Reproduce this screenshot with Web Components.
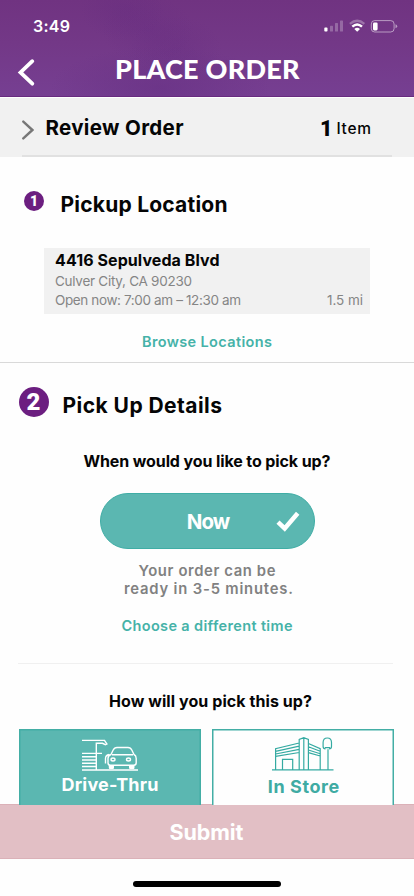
<!DOCTYPE html>
<html lang="en">
<head>
<meta charset="utf-8">
<meta name="viewport" content="width=device-width,initial-scale=1">
<title>Place Order</title>
<style>
html,body{margin:0;background:#fefefe;overflow:hidden}
body{font-family:Inter,Roboto,"Liberation Sans",sans-serif;color:#050505}
</style>
</head>
<body>
<order-page></order-page>
<script>
const define=(name,html,connected)=>{
  const t=document.createElement('template');
  t.innerHTML=html;
  customElements.define(name,class extends HTMLElement{
    constructor(){super();this.attachShadow({mode:'open'}).append(t.content.cloneNode(true));}
    connectedCallback(){if(connected)connected.call(this);}
  });
};

define('status-bar',`<style>
:host{display:flex;justify-content:space-between;align-items:center;height:20px;padding:16px 16px 0 33px;color:#fff}
ui-label{font:600 16px/20px Inter,sans-serif;margin-top:-1px}
svg{display:block}
</style>
<ui-label span="37">3:49</ui-label>
<svg width="75" height="16" viewBox="0 0 75 16" fill="none">
<rect x="1.3" y="9.6" width="3.2" height="4" rx=".8" fill="#fff"/>
<g fill="#fff" opacity=".25"><rect x="7" y="7.7" width="3" height="5.8" rx=".6"/><rect x="12" y="5" width="3" height="8.5" rx=".6"/><rect x="17" y="2.4" width="3" height="11.1" rx=".6"/></g>
<path d="M26.9 5.8Q34.2-.4 41.3 5.8" stroke="#fff" stroke-width="2.3" opacity=".3"/>
<path d="M29.3 8.6Q34.2 4.2 39 8.6" stroke="#fff" stroke-width="2.4"/>
<path d="M31.3 11Q34.2 8.4 37 11L34.2 13.8Z" fill="#fff"/>
<rect x="48.3" y="2.6" width="22.8" height="11.4" rx="3.4" stroke="#fff" stroke-opacity=".5"/>
<rect x="50" y="4.4" width="4.6" height="8" rx="1.3" fill="#fff"/>
<path d="M72.5 6.2v4q1.7-.6 1.7-2t-1.7-2Z" fill="#fff" opacity=".5"/>
</svg>`);

define('app-header',`<style>
:host{display:block;box-sizing:border-box;height:97px;color:#fff;border-bottom:1px solid #682b7f;
background:radial-gradient(ellipse 42px 30px at 122px 10px,#642b8048,transparent),radial-gradient(ellipse 46px 34px at 148px 30px,#642b8048,transparent),radial-gradient(ellipse 46px 32px at 176px 48px,#642b8048,transparent),radial-gradient(ellipse 110px 42px at 160px 88px,#622c8078,transparent),linear-gradient(#703381,#733887 45%,#763f92)}
.bar{display:grid;grid-template-columns:115px auto;align-items:center;height:36px;margin-top:16px}
svg{display:block;margin-left:17px;margin-top:4px}
::slotted(ui-label){font:900 27px/34px Lato,sans-serif;margin-top:-2px}
</style>
<status-bar></status-bar>
<div class="bar"><svg width="20" height="30" viewBox="0 0 20 30" fill="none" stroke="#fff" stroke-width="3.8" stroke-linecap="round" stroke-linejoin="miter"><path d="M15.3 4.2 3.5 15.5 15.3 26.7"/></svg><slot></slot></div>`);

define('review-row',`<style>
:host{display:block;height:61px;background:linear-gradient(#fefefe 1px,#f1f1f1 1px,#f1f1f1 60px,#fefefe 60px)}
div{display:flex;align-items:center;height:58px;margin:0 22px;border-bottom:2px solid #e1e1e1}
svg{margin-top:8px}
.t{font-size:20.5px;font-weight:700;margin:4px 0 0 11.5px}
.n{font:900 21.5px/20px Roboto,sans-serif;margin:5px 4px 0 auto}
.i{font-size:15.5px;font-weight:500;margin:5px 21px 0 0}
</style>
<div><svg width="12" height="20" viewBox="0 0 12 20" fill="none" stroke="#777" stroke-width="2.4" stroke-linecap="round"><path d="M1.3 1.6 10.4 10 1.3 18.4"/></svg>
<ui-label class="t" span="138">Review Order</ui-label><ui-label class="n">1</ui-label><ui-label class="i" span="34.5">Item</ui-label></div>`);

define('step-title',`<style>
:host{display:flex;align-items:flex-start}
i{flex:none;display:grid;place-items:center;width:var(--d);height:var(--d);border-radius:50%;background:#6c1e80;color:#fff;font:900 var(--f)/1 Roboto,sans-serif}
::slotted(ui-label){font-size:21px;font-weight:700}
</style><i><slot name="n"></slot></i><slot></slot>`);

define('location-card',`<style>
:host{display:block;box-sizing:border-box;height:66px;background:#f1f1f1;padding:2px 7px 0 11px;color:#858585;font-size:13.5px}
.a{color:#050505;font-weight:700;font-size:16px}
div{display:flex;justify-content:space-between;margin-top:-.5px}
.c{margin-top:.5px}
</style>
<ui-label class="a" span="164.5">4416 Sepulveda Blvd</ui-label>
<ui-label class="c" span="137">Culver City, CA 90230</ui-label>
<div><ui-label span="186">Open now: 7:00 am – 12:30 am</ui-label><ui-label span="36">1.5 mi</ui-label></div>`);

define('time-pill',`<style>
:host{display:grid;grid-template-columns:1fr auto 1fr;align-items:center;box-sizing:border-box;width:215px;height:56px;border-radius:28px;background:#5bb7b1;border:1px solid #3fada5;color:#fff;padding-top:1px}
::slotted(ui-label){font-size:20.5px;font-weight:700;grid-column:2;margin-left:3px}
svg{justify-self:end;margin-right:14px}
</style><slot></slot>
<svg width="24" height="22" viewBox="0 0 24 22" fill="none" stroke="#fff" stroke-width="4.5"><path d="M2 11.2 8.7 17.5 21.7 2.3"/></svg>`);

define('pickup-option',`<style>
:host{display:flex;flex-direction:column;align-items:center;box-sizing:border-box;width:182px;height:76px;padding:1px 1px 0;box-shadow:inset 0 1.5px #43aea5,inset 1.5px 0 #43aea5,inset -1.5px 0 #43aea5;color:#3faba3;background:#fefefe}
:host([selected]){background:#5bb7b1;color:#fff}
::slotted(ui-label){font-size:18px;font-weight:700}
::slotted(svg){display:block;flex:none}
</style><slot name="icon"></slot><slot></slot>`);

define('submit-bar',`<style>
:host{display:grid;place-items:center;box-sizing:border-box;height:55px;background:#e2bfc5;border:1px solid #dbb1b8;border-width:1px 0;color:#fff}
ui-label{font-size:21.5px;font-weight:700;margin-right:1px}
</style><ui-label span="74">Submit</ui-label>`);

define('order-page',`<style>
:host{display:block;width:414px;height:896px;background:#fefefe;overflow:hidden}
section{display:flex;flex-direction:column;align-items:center;box-sizing:border-box}
.loc{height:205px;padding-top:33px;border-bottom:1px solid #d9d9d9}
step-title{align-self:flex-start}
location-card{width:326px;margin:33px 0 18px}
.link{color:#45b2a8;font-size:14.5px;font-weight:600}
.det{height:301px;padding-top:24px;border-bottom:1px solid #f0f0f0;width:375px;margin:0 21px 0 18px}
.det>ui-label,.how>ui-label{font-size:16px;font-weight:700}
.det>ui-label,.det>time-pill{position:relative;left:1.5px}
.det>.g{color:#818181;font-size:14.8px;font-weight:600;line-height:18px}
.det>.link{font-size:14.5px;font-weight:600}
.how{height:140px;padding-top:27px}
.opts{display:flex;gap:11px;margin:18px 1px 0 0}
.home{width:148px;height:6px;border-radius:3px;background:#000;margin:22px auto 0}
</style>
<app-header><ui-label span="184.5">PLACE ORDER</ui-label></app-header>
<review-row></review-row>
<section class="loc">
<step-title style="--d:20px;--f:14px;margin-left:24px"><span slot="n">1</span><ui-label span="167" style="margin:4px 0 0 16.5px">Pickup Location</ui-label></step-title>
<location-card></location-card>
<ui-label class="link" span="130">Browse Locations</ui-label>
</section>
<section class="det">
<step-title style="--d:30px;--f:24px;margin-left:.5px"><span slot="n">2</span><ui-label span="159.5" style="margin:9px 0 0 14px">Pick Up Details</ui-label></step-title>
<ui-label span="247" style="margin-top:34px">When would you like to pick up?</ui-label>
<time-pill style="margin-top:22px"><ui-label span="43.5">Now</ui-label></time-pill>
<ui-label class="g" span="137" style="margin-top:13px">Your order can be</ui-label>
<ui-label class="g" span="169" style="margin-left:3px">ready in 3-5 minutes.</ui-label>
<ui-label class="link" span="171" style="margin-top:18px">Choose a different time</ui-label>
</section>
<section class="how">
<ui-label span="203" style="margin-left:7px">How will you pick this up?</ui-label>
<div class="opts">
<pickup-option selected>
<svg slot="icon" width="58" height="34" viewBox="0 0 58 34" fill="none" stroke="#fff" stroke-width="1.4" style="margin:8px 0 3px"><path d="M1 2.4h22.5l2.4 3.6-1.5.7-3-1.4H15.3v26.5M1 15.4h20M1 18.7h14.5M1 22h14.5M1 25.2h14.5M1 28.5h14.5M1 32h56"/><path d="M29.4 27.3c-1.6 0-2.4-.8-2.4-2.5v-4.3c0-1.8 1-3.5 3-4l2.2-4.5c.8-1.7 2-2.5 3.8-2.5h11c1.8 0 3 .8 3.8 2.5L53 16.5c1.5.7 2.2 2 2.2 4v4.3c0 1.5-1 2.5-2.5 2.5H29.4M31 16.8h21M24.5 25.5v-5c0-1.7 1.2-3.5 3.7-4"/><ellipse cx="32" cy="21.5" rx="2" ry="1.5"/><ellipse cx="47.5" cy="21.5" rx="2" ry="1.5"/><path d="M27.8 27h5.2v2.5c0 1-.5 1.5-1.5 1.5h-2.2c-1 0-1.5-.5-1.5-1.5ZM48 27h5.5v2.5c0 1-.5 1.5-1.5 1.5h-2.5c-1 0-1.5-.5-1.5-1.5Z" fill="#fff" stroke="none"/></svg>
<ui-label span="97">Drive-Thru</ui-label></pickup-option>
<pickup-option>
<svg slot="icon" width="62" height="35" viewBox="0 0 62 35" fill="none" stroke="#35aaa2" stroke-width="1.2" style="margin:7px 0 5px"><path d="M0 32.8h61.5M3.6 32.5V11.6L27.2 6M3.6 14.3 27.2 9.2M3.6 17 27.2 12.3M3.6 19.3 27.2 15.5M27.2 32.5V2.4l4.6-1.7 4.6 1.7v30M31.8 1v31.5M36.4 6.5l11.8 5.2v20.8M36.4 9.8l11.8 4.4M36.4 13l11.8 3.7M36.4 15.7l11.8 3.3M10.5 32.5V22.4h10.2v10.1M56 12.3v20.2"/><path d="M53.5 11.8c-1.6 0-2.4-.8-2.4-2.3V5.6c0-2.8 1.7-4.6 4.2-4.6s4.2 1.8 4.2 4.6v3.9c0 1.5-.8 2.3-2.4 2.3M52.8 10.7h5.2"/></svg>
<ui-label span="71.5" style="margin-right:-1px">In Store</ui-label></pickup-option>
</div>
</section>
<submit-bar></submit-bar>
<div class="home"></div>`);

/* One line of text, tracked so that it spans the width given in "span".
   Registered last, when every parent that sets its font is in place. */
define('ui-label',`<style>
:host{display:block;white-space:pre;width:max-content;line-height:20px;flex:none}
b{display:block;font-weight:inherit;width:max-content}
</style><b><slot></slot></b>`,function(){
  const w=+this.getAttribute('span'),n=this.textContent.length-1;
  if(!w||n<1)return;
  const b=this.shadowRoot.querySelector('b');
  const ls=(w-b.getBoundingClientRect().width)/n;
  b.style.letterSpacing=ls+'px';
  b.style.marginRight=-ls+'px';
});
</script>
</body>
</html>
